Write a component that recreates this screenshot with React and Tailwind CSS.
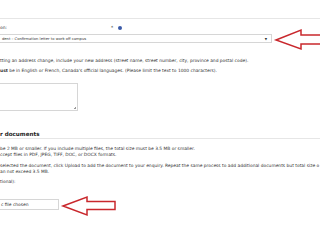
export default function App() {
  return (
    <div className="relative w-[320px] h-[240px] overflow-hidden bg-white text-[#333] font-['DejaVu_Sans',Verdana,sans-serif] text-[4.4px] leading-[6px]">
      <div className="h-[19px] border-b border-[#e6e6e6]" />

      <div className="mt-[6px] flex items-center h-[6px]">
        <span>on:</span>
        <span className="ml-[104px] text-[#333]">*</span>
        <span className="ml-[5px] w-[4px] h-[4px] rounded-full bg-[#3a5aa8]" />
      </div>

      <div className="mt-[3px] -ml-[2px] w-[274px] h-[9px] border border-[#d6d6d6] flex items-center justify-between pl-[3px] pr-[4px] text-[3.7px]">
        <span>dent – Confirmation letter to work off campus</span>
        <span className="text-[3px]">▼</span>
      </div>

      <p className="mt-[15px]">tting an address change, include your new address (street name, street number, city, province and postal code).</p>
      <p className="mt-[4px]"><b>ust</b> be in English or French, Canada's official languages. (Please limit the text to 1000 characters).</p>

      <div className="mt-[9px] -ml-[2px] w-[80px] h-[28px] border border-[#d6d6d6] relative">
        <span className="absolute right-[1px] bottom-[1px] w-[2px] h-[2px] border-r border-b border-[#999]" />
      </div>

      <h2 className="mt-[19px] font-bold text-[5.6px] leading-[8px] border-b border-[#e6e6e6] text-[#222]">r documents</h2>

      <div className="mt-[7px]">
        <p>be 2 MB or smaller. If you include multiple files, the total size must be 3.5 MB or smaller.</p>
        <p>ccept files in PDF, JPEG, TIFF, DOC, or DOCX formats.</p>
      </div>
      <div className="mt-[5px] whitespace-nowrap">
        <p>selected the document, click Upload to add the document to your enquiry. Repeat the same process to add additional documents but total size o</p>
        <p>an not exceed 3.5 MB.</p>
      </div>
      <p className="mt-[4px]">tional):</p>

      <div className="mt-[14px] -ml-[2px] w-[61px] h-[11px] border border-[#d6d6d6] flex items-center pl-[2px]">
        c file chosen
      </div>

      <svg className="absolute left-0 top-0" width="320" height="240" viewBox="0 0 320 240">
        <path d="M276 40 L301 30 L301 35 L324 35 L324 44 L301 44 L301 49 Z" fill="white" stroke="#c9282d" strokeWidth="1.5" strokeLinejoin="miter" />
        <path d="M63 206 L87 197 L87 201.5 L115 201.5 L115 209.5 L87 209.5 L87 215 Z" fill="white" stroke="#c9282d" strokeWidth="1.5" strokeLinejoin="miter" />
      </svg>
    </div>
  )
}
